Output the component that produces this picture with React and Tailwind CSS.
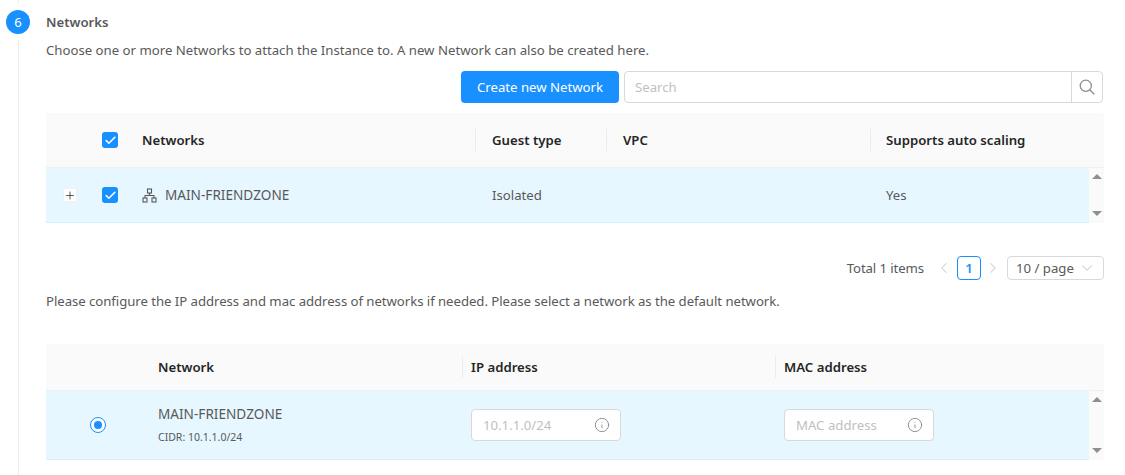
import { ChevronLeft, ChevronRight, ChevronDown, Check, Plus, Info } from "lucide-react";

const NetworkIcon = () => (
  <svg width="15" height="15" viewBox="0 0 15 15" fill="none" stroke="#595959" strokeWidth="1.1">
    <rect x="5.5" y="1" width="4" height="4" />
    <rect x="1" y="10" width="4" height="4" />
    <rect x="10" y="10" width="4" height="4" />
    <path d="M7.5 5V7.5M3 10V7.5H12V10" />
  </svg>
);

const SearchIcon = () => (
  <svg width="16" height="16" viewBox="0 0 16 16" fill="none" stroke="#8c8c8c" strokeWidth="1.3">
    <circle cx="6.8" cy="6.8" r="5.6" />
    <path d="M11 11L15.2 15.2" />
  </svg>
);

const CheckBox = () => (
  <span className="flex items-center justify-center w-4 h-4 rounded-[3px] bg-[#1890ff]">
    <Check size={13} color="#fff" strokeWidth={3} />
  </span>
);

const ScrollBar = () => (
  <div className="flex flex-col items-center justify-between w-[15px] pt-[6px] pb-[7px] bg-[#fafafa]">
    <span className="w-0 h-0 border-x-[5px] border-x-transparent border-b-[5px] border-b-[#8f8f8f]" />
    <span className="w-0 h-0 border-x-[5px] border-x-transparent border-t-[5px] border-t-[#8f8f8f]" />
  </div>
);

const Divider = () => <span className="absolute left-0 top-1/2 w-px h-[22px] -translate-y-1/2 bg-[#ececec]" />;

const HeadCell = ({ className, children, divider }) => (
  <div className={`relative flex items-center h-full font-semibold text-[#262626] ${className}`}>
    {divider && <Divider />}
    {children}
  </div>
);

const InputBox = ({ placeholder }) => (
  <div className="flex items-center justify-between w-[150px] h-[32px] pl-[11px] pr-[10px] bg-white border border-[#d9d9d9] rounded">
    <span className="text-[#bfbfbf]">{placeholder}</span>
    <Info size={16} color="#8c8c8c" strokeWidth={1.4} />
  </div>
);

export default function App() {
  return (
    <div className="flex w-[1125px] h-[475px] overflow-hidden bg-white text-[13.2px] leading-[22px] text-[#595959] font-['Noto_Sans','Open_Sans',sans-serif]">
      <div className="flex flex-col items-center w-[24px] ml-[6px] mr-[16px] shrink-0">
        <span className="w-px h-[3px] bg-[#ececec]" />
        <span className="flex items-center justify-center w-6 h-6 mt-[7px] rounded-full bg-[#1890ff] text-white text-[13px]">6</span>
        <span className="w-px flex-1 mt-[6px] bg-[#ececec]" />
      </div>

      <div className="w-[1058px]">
        <div className="mt-[11px] font-semibold">Networks</div>
        <div className="mt-[6px]">Choose one or more Networks to attach the Instance to. A new Network can also be created here.</div>

        <div className="flex justify-end gap-[5px] mt-[10px] mr-px">
          <button className="h-8 w-[158px] rounded bg-[#1890ff] text-white">Create new Network</button>
          <div className="flex w-[479px] h-8 border border-[#d9d9d9] rounded">
            <span className="flex-1 px-[10px] leading-[30px] text-[#bfbfbf]">Search</span>
            <span className="flex items-center justify-center w-[31px] border-l border-[#d9d9d9]">
              <SearchIcon />
            </span>
          </div>
        </div>

        <div className="flex items-center h-[55px] mt-[10px] bg-[#fafafa] rounded-t-[2px] border-b border-[#f0f0f0]">
          <div className="flex items-center justify-end w-[72px]"><CheckBox /></div>
          <HeadCell className="w-[333px] ml-[24px]">Networks</HeadCell>
          <HeadCell className="w-[131px] pl-[17px]" divider>Guest type</HeadCell>
          <HeadCell className="w-[264px] pl-[17px]" divider>VPC</HeadCell>
          <HeadCell className="flex-1 pl-[16px]" divider>Supports auto scaling</HeadCell>
        </div>
        <div className="flex h-[55px]">
          <div className="flex items-center flex-1 bg-[#e6f7ff] border-b border-[#dcf0fa]">
            <div className="flex items-center w-[72px]">
              <span className="flex items-center justify-center w-[14px] h-[14px] ml-[17px] mr-[25px] bg-white rounded-[2px] border border-[#f0f0f0]">
                <Plus size={13} color="#262626" strokeWidth={1.5} />
              </span>
              <CheckBox />
            </div>
            <div className="flex items-center gap-[8px] w-[333px] ml-[24px] text-[13.6px]"><NetworkIcon />MAIN-FRIENDZONE</div>
            <div className="w-[131px] pl-[17px]">Isolated</div>
            <div className="w-[264px]" />
            <div className="pl-[16px]">Yes</div>
          </div>
          <ScrollBar />
        </div>

        <div className="flex items-center justify-end h-6 mt-[33px]">
          <span className="tracking-[-0.1px]">Total 1 items</span>
          <ChevronLeft size={18} color="#bfbfbf" className="ml-[11px]" strokeWidth={1.3} />
          <span className="flex items-center justify-center w-6 h-6 ml-[4px] rounded border border-[#1890ff] text-[#1890ff] font-semibold">1</span>
          <ChevronRight size={18} color="#bfbfbf" className="ml-[3px]" strokeWidth={1.3} />
          <div className="flex items-center justify-between w-[97px] h-6 ml-[5px] pl-2 pr-[7px] border border-[#d9d9d9] rounded">
            <span>10 / page</span>
            <ChevronDown size={18} color="#bfbfbf" strokeWidth={1.3} />
          </div>
        </div>

        <div className="mt-[10px] tracking-[-0.05px]">Please configure the IP address and mac address of networks if needed. Please select a network as the default network.</div>

        <div className="flex items-center h-[47px] mt-[32px] bg-[#fafafa] border-b border-[#f0f0f0]">
          <HeadCell className="w-[416px] pl-[112px]">Network</HeadCell>
          <HeadCell className="w-[313px] pl-[9px]" divider>IP address</HeadCell>
          <HeadCell className="flex-1 pl-[9px]" divider>MAC address</HeadCell>
        </div>
        <div className="flex h-[69px]">
          <div className="flex items-center flex-1 bg-[#e6f7ff] border-b border-[#dcf0fa]">
            <div className="flex justify-center w-[104px]">
              <span className="flex items-center justify-center w-4 h-4 bg-white rounded-full border border-[#1890ff]">
                <span className="w-2 h-2 rounded-full bg-[#1890ff]" />
              </span>
            </div>
            <div className="w-[313px] pl-[8px] pb-[2px]">
              <div className="text-[13.6px]">MAIN-FRIENDZONE</div>
              <div className="mt-[4px] text-[10.5px] leading-[16px]">CIDR: 10.1.1.0/24</div>
            </div>
            <div className="w-[313px] pl-[8px]"><InputBox placeholder="10.1.1.0/24" /></div>
            <div className="pl-[8px]"><InputBox placeholder="MAC address" /></div>
          </div>
          <ScrollBar />
        </div>
      </div>
    </div>
  );
}
